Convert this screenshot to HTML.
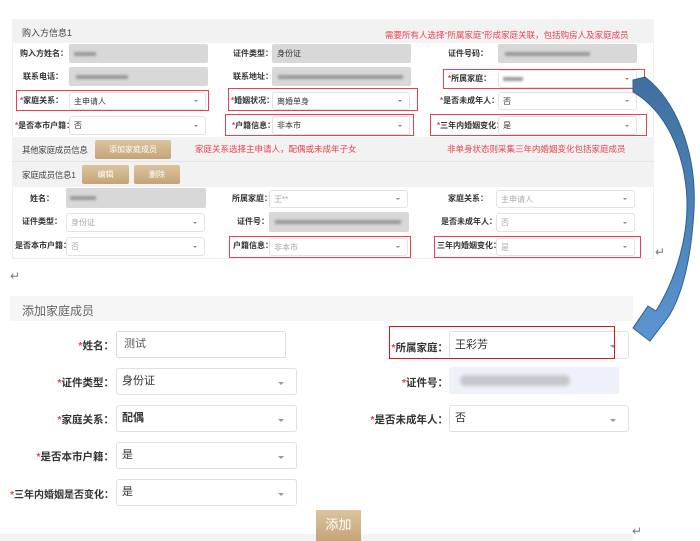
<!DOCTYPE html>
<html><head><meta charset="utf-8"><style>
*{margin:0;padding:0;box-sizing:border-box}
body{width:700px;height:541px;background:#fff;position:relative;overflow:hidden;font-family:"Liberation Sans","Noto Sans CJK SC",sans-serif;color:#333}
.a{position:absolute;white-space:nowrap}
.l{font-size:8px;font-weight:bold;color:#333;line-height:10px}
.g{background:#d8d8d8;border-radius:2px}
.s{background:#fff;border:1px solid #e2e2e2;border-radius:3px;font-size:8px;padding-left:4px;line-height:17px}
.s:after{content:"";position:absolute;right:7px;top:50%;margin-top:-1px;border-left:2.5px solid transparent;border-right:2.5px solid transparent;border-top:2.5px solid #888}
.r{border:1.5px solid #e8424f}
.st{color:#e8424f}
.red{color:#e8424f;font-size:8.5px}
.btn{background:linear-gradient(#dcc49f,#c4a476);color:#fff;font-size:8px;text-align:center;border-radius:2px}
.bl{filter:blur(1.2px);background:#999;height:4px;position:absolute}
.L{font-size:10.5px;font-weight:bold;color:#333;text-align:right}
.S{background:#fff;border:1px solid #e0e0e0;border-radius:3px;font-size:11px;padding-left:5px}
.S:after{content:"";position:absolute;right:12px;top:50%;border-left:3px solid transparent;border-right:3px solid transparent;border-top:3px solid #999}
.gy{color:#aaa}
</style></head><body>
<div class="a" style="left:12px;top:19px;width:642px;height:240px;background:#fff;border:1px solid #eee"></div>
<div class="a" style="left:12px;top:19px;width:642px;height:24px;background:#f2f2f2"></div>
<div class="a" style="left:22px;top:26px;font-size:9px;color:#444">购入方信息1</div>
<div class="a red" style="left:385px;top:29px">需要所有人选择“所属家庭”形成家庭关联，包括购房人及家庭成员</div>

<div class="a l" style="left:20px;top:49px">购入方姓名：</div>
<div class="a g" style="left:69px;top:44px;width:139px;height:19px"></div><div class="bl" style="left:74px;top:52px;width:22px"></div>
<div class="a l" style="left:233px;top:49px">证件类型：</div>
<div class="a g" style="left:272px;top:44px;width:139px;height:19px;font-size:8px;line-height:19px;padding-left:5px">身份证</div>
<div class="a l" style="left:448px;top:49px">证件号码：</div>
<div class="a g" style="left:498px;top:44px;width:139px;height:19px"></div><div class="bl" style="left:505px;top:52px;width:85px"></div>

<div class="a l" style="left:23px;top:72px">联系电话：</div>
<div class="a g" style="left:69px;top:67px;width:139px;height:19px"></div><div class="bl" style="left:76px;top:75px;width:52px"></div>
<div class="a l" style="left:233px;top:72px">联系地址：</div>
<div class="a g" style="left:272px;top:67px;width:139px;height:19px"></div><div class="bl" style="left:278px;top:75px;width:125px"></div>
<div class="a r" style="left:443px;top:69px;width:202px;height:20px"></div>
<div class="a l" style="left:448px;top:74px"><span class="st">*</span>所属家庭：</div>
<div class="a s" style="left:498px;top:70px;width:139px;height:18px"></div><div class="bl" style="left:503px;top:77px;width:20px"></div>

<div class="a r" style="left:16px;top:90px;width:193px;height:21px"></div>
<div class="a l" style="left:20px;top:96px"><span class="st">*</span>家庭关系：</div>
<div class="a s" style="left:69px;top:92px;width:137px;height:18px">主申请人</div>
<div class="a r" style="left:228px;top:88px;width:190px;height:23px"></div>
<div class="a l" style="left:231px;top:96px"><span class="st">*</span>婚姻状况：</div>
<div class="a s" style="left:272px;top:92px;width:138px;height:18px">离婚单身</div>
<div class="a l" style="left:440px;top:96px"><span class="st">*</span>是否未成年人：</div>
<div class="a s" style="left:498px;top:92px;width:139px;height:18px">否</div>

<div class="a l" style="left:15px;top:121px"><span class="st">*</span>是否本市户籍：</div>
<div class="a s" style="left:69px;top:116px;width:137px;height:19px">否</div>
<div class="a r" style="left:225px;top:114px;width:189px;height:22px"></div>
<div class="a l" style="left:232px;top:121px"><span class="st">*</span>户籍信息：</div>
<div class="a s" style="left:272px;top:116px;width:138px;height:19px">非本市</div>
<div class="a r" style="left:430px;top:114px;width:217px;height:22px"></div>
<div class="a l" style="left:437px;top:121px"><span class="st">*</span>三年内婚姻变化：</div>
<div class="a s" style="left:498px;top:116px;width:139px;height:19px">是</div>

<div class="a" style="left:12px;top:137px;width:642px;height:50px;background:#f2f2f2"></div>
<div class="a" style="left:12px;top:161px;width:642px;height:1px;background:#e4e4e4"></div>
<div class="a" style="left:22px;top:144px;font-size:8.5px;color:#444;letter-spacing:-0.3px">其他家庭成员信息</div>
<div class="a btn" style="left:95px;top:140px;width:76px;height:19px;line-height:19px">添加家庭成员</div>
<div class="a red" style="left:195px;top:143px">家庭关系选择主申请人，配偶或未成年子女</div>
<div class="a red" style="left:447px;top:143px">非单身状态则采集三年内婚姻变化包括家庭成员</div>
<div class="a" style="left:22px;top:169px;font-size:8.5px;color:#444;letter-spacing:-0.3px">家庭成员信息1</div>
<div class="a btn" style="left:82px;top:165px;width:47px;height:19px;line-height:19px">编辑</div>
<div class="a btn" style="left:134px;top:165px;width:46px;height:19px;line-height:19px">删除</div>

<div class="a l" style="left:30px;top:194px">姓名：</div>
<div class="a g" style="left:66px;top:188px;width:140px;height:20px"></div><div class="bl" style="left:70px;top:196px;width:26px"></div>
<div class="a l" style="left:232px;top:194px">所属家庭：</div>
<div class="a s gy" style="left:269px;top:190px;width:139px;height:18px">王**</div>
<div class="a l" style="left:448px;top:194px">家庭关系：</div>
<div class="a s gy" style="left:496px;top:190px;width:139px;height:18px">主申请人</div>

<div class="a l" style="left:22px;top:217px">证件类型：</div>
<div class="a s gy" style="left:66px;top:213px;width:139px;height:19px">身份证</div>
<div class="a l" style="left:237px;top:217px">证件号：</div>
<div class="a g" style="left:269px;top:212px;width:140px;height:20px"></div><div class="bl" style="left:275px;top:220px;width:126px"></div>
<div class="a l" style="left:441px;top:217px">是否未成年人：</div>
<div class="a s gy" style="left:496px;top:213px;width:139px;height:19px">否</div>

<div class="a l" style="left:15px;top:241px">是否本市户籍：</div>
<div class="a s gy" style="left:66px;top:237px;width:139px;height:19px">否</div>
<div class="a r" style="left:229px;top:236px;width:182px;height:22px"></div>
<div class="a l" style="left:233px;top:241px">户籍信息：</div>
<div class="a s gy" style="left:269px;top:238px;width:139px;height:18px">非本市</div>
<div class="a r" style="left:434px;top:236px;width:207px;height:22px"></div>
<div class="a l" style="left:437px;top:241px">三年内婚姻变化：</div>
<div class="a s gy" style="left:496px;top:238px;width:139px;height:18px">是</div>

<div class="a" style="left:10px;top:269px;font-size:12px;color:#777">↵</div>
<div class="a" style="left:655px;top:245px;font-size:12px;color:#777">↵</div>

<div class="a" style="left:10px;top:296px;width:623px;height:25px;background:#f6f6f6"></div>
<div class="a" style="left:22px;top:302px;font-size:12px;color:#666">添加家庭成员</div>

<div class="a L" style="left:0;top:338px;width:114px"><span class="st">*</span>姓名：</div>
<div class="a" style="left:116px;top:331px;width:170px;height:27px;border:1px solid #ddd;border-radius:2px;font-size:11px;line-height:25px;padding-left:7px;color:#555">测试</div>
<div class="a L" style="left:0;top:375px;width:114px"><span class="st">*</span>证件类型：</div>
<div class="a S" style="left:116px;top:368px;width:181px;height:27px;line-height:25px">身份证</div>
<div class="a L" style="left:0;top:412px;width:114px"><span class="st">*</span>家庭关系：</div>
<div class="a S" style="left:116px;top:405px;width:181px;height:27px;line-height:25px;font-weight:bold">配偶</div>
<div class="a L" style="left:0;top:449px;width:114px"><span class="st">*</span>是否本市户籍：</div>
<div class="a S" style="left:116px;top:442px;width:181px;height:27px;line-height:25px">是</div>
<div class="a L" style="left:0;top:486px;width:114px;font-size:10px"><span class="st">*</span>三年内婚姻是否变化：</div>
<div class="a S" style="left:116px;top:479px;width:181px;height:27px;line-height:25px">是</div>

<div class="a" style="left:0;top:534px;width:633px;height:7px;background:#f3f3f3"></div>
<div class="a btn" style="left:316px;top:510px;width:45px;height:31px;line-height:29px;font-size:13px;border-radius:0">添加</div>
<div class="a" style="left:632px;top:524px;font-size:12px;color:#777">↵</div>

<div class="a S" style="left:449px;top:331px;width:180px;height:28px;line-height:26px">王彩芳</div>
<div class="a" style="left:389px;top:326px;width:226px;height:33px;border:1.5px solid #e0141e"></div>
<div class="a L" style="left:380px;top:340px;width:68px"><span class="st">*</span>所属家庭：</div>
<div class="a L" style="left:380px;top:375px;width:68px"><span class="st">*</span>证件号：</div>
<div class="a" style="left:449px;top:367px;width:170px;height:27px;background:#eef0fa;border-radius:2px"></div>
<div class="a" style="left:460px;top:375px;width:110px;height:11px;background:#c8c8cc;border-radius:6px;filter:blur(1.5px)"></div>
<div class="a L" style="left:370px;top:412px;width:78px"><span class="st">*</span>是否未成年人：</div>
<div class="a S" style="left:449px;top:405px;width:180px;height:27px;line-height:25px">否</div>

<svg class="a" style="left:0;top:0" width="700" height="541">
<defs><linearGradient id="gr" x1="0" y1="0" x2="0" y2="1"><stop offset="0" stop-color="#3f6f9f"/><stop offset="1" stop-color="#5b95d0"/></linearGradient></defs>
<path d="M633,80 L645,77 C675,100 697,150 694,210 C691,262 681,296 669,316 L650,341 L633,328 L648,306 L656,311 C675,280 688,240 687,200 C685,150 664,110 633,92 Z" fill="url(#gr)" stroke="#2f5f92" stroke-width="1"/>
</svg>
</body></html>
